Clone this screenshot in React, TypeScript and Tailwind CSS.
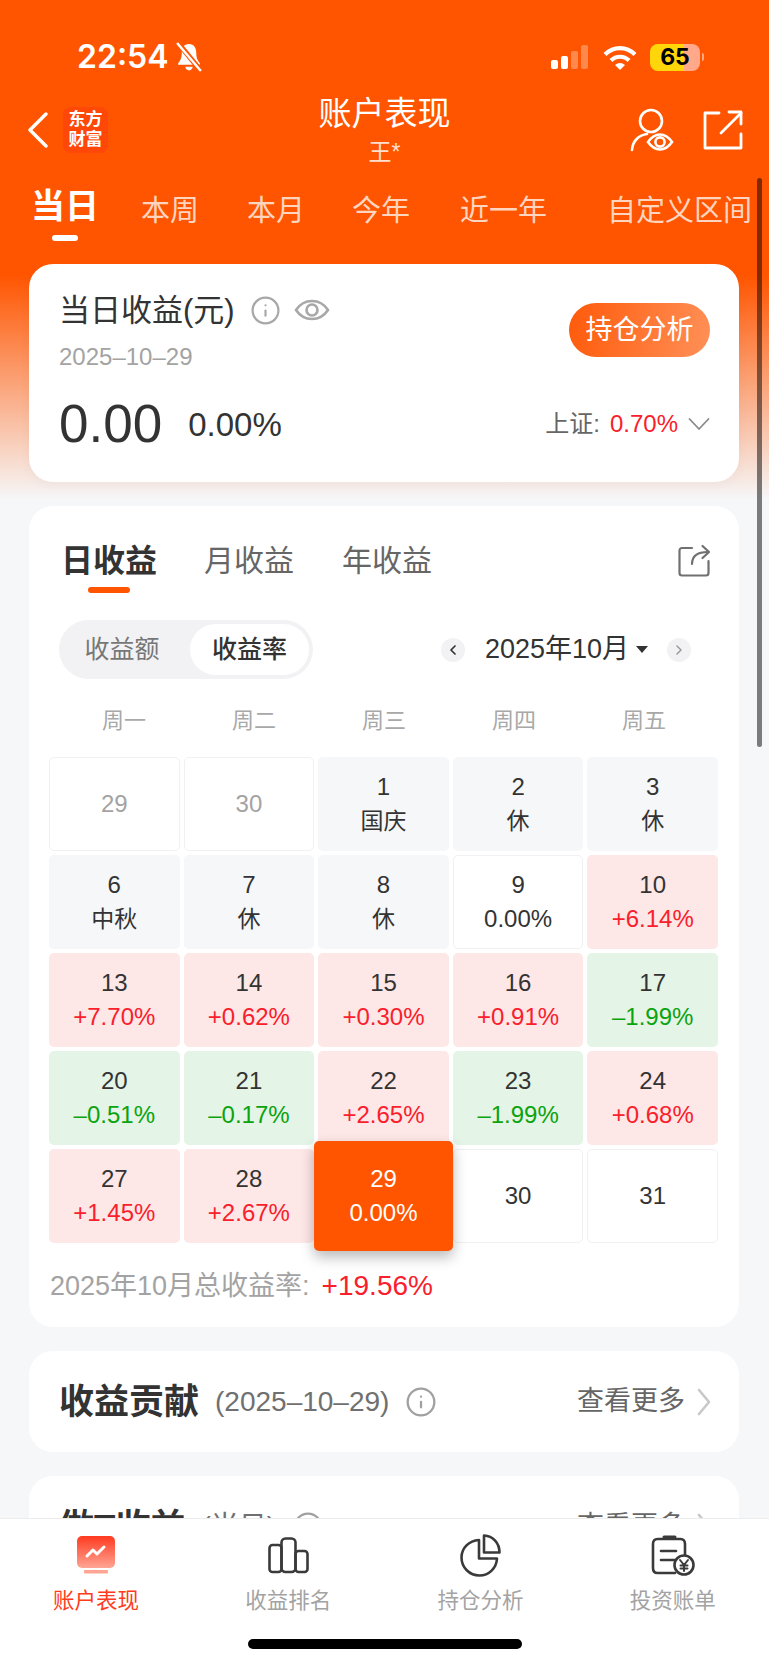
import { ChevronLeft, ChevronRight, Info } from 'lucide-react'

type Tone = 'muted' | 'plain' | 'rest' | 'up' | 'down' | 'today'

type DayCell = { day: number; sub?: string; tone: Tone }

const DAYS: DayCell[] = [
  { day: 29, tone: 'muted' },
  { day: 30, tone: 'muted' },
  { day: 1, sub: '国庆', tone: 'rest' },
  { day: 2, sub: '休', tone: 'rest' },
  { day: 3, sub: '休', tone: 'rest' },
  { day: 6, sub: '中秋', tone: 'rest' },
  { day: 7, sub: '休', tone: 'rest' },
  { day: 8, sub: '休', tone: 'rest' },
  { day: 9, sub: '0.00%', tone: 'plain' },
  { day: 10, sub: '+6.14%', tone: 'up' },
  { day: 13, sub: '+7.70%', tone: 'up' },
  { day: 14, sub: '+0.62%', tone: 'up' },
  { day: 15, sub: '+0.30%', tone: 'up' },
  { day: 16, sub: '+0.91%', tone: 'up' },
  { day: 17, sub: '–1.99%', tone: 'down' },
  { day: 20, sub: '–0.51%', tone: 'down' },
  { day: 21, sub: '–0.17%', tone: 'down' },
  { day: 22, sub: '+2.65%', tone: 'up' },
  { day: 23, sub: '–1.99%', tone: 'down' },
  { day: 24, sub: '+0.68%', tone: 'up' },
  { day: 27, sub: '+1.45%', tone: 'up' },
  { day: 28, sub: '+2.67%', tone: 'up' },
  { day: 29, sub: '0.00%', tone: 'today' },
  { day: 30, tone: 'plain' },
  { day: 31, tone: 'plain' },
]

const CELL_BG: Record<Tone, string> = {
  muted: 'bg-white border border-[#f1f1f3]',
  plain: 'bg-white border border-[#f1f1f3]',
  rest: 'bg-[#f6f7f9]',
  up: 'bg-[#fde7e7]',
  down: 'bg-[#e4f4e6]',
  today: 'z-10',
}

const SUB_STYLE: Record<Tone, string> = {
  muted: 'text-[24px] text-[#a3a3a3]',
  plain: 'text-[24px] text-[#333333]',
  rest: 'text-[23px] text-[#333333]',
  up: 'text-[24px] text-[#f9202c]',
  down: 'text-[24px] text-[#0ba30f]',
  today: 'text-[24px] text-white',
}

function Cell({ cell }: { cell: DayCell }) {
  const dayColor =
    cell.tone === 'muted' ? 'text-[#a3a3a3]' : cell.tone === 'today' ? 'text-white' : 'text-[#333333]'
  return (
    <div className={`relative h-[94px] rounded-[5px] flex flex-col items-center justify-center ${CELL_BG[cell.tone]}`}>
      {cell.tone === 'today' && (
        <div className="absolute -left-[4px] -right-[4px] -top-[8px] -bottom-[8px] rounded-[5px] bg-[#ff5500] shadow-[0_6px_14px_rgba(0,0,0,0.28)]" />
      )}
      <span className={`relative text-[24px] leading-[34px] ${dayColor}`}>{cell.day}</span>
      {cell.sub && <span className={`relative leading-[34px] ${SUB_STYLE[cell.tone]}`}>{cell.sub}</span>}
    </div>
  )
}

function SignalBars() {
  return (
    <div className="flex items-end gap-[3px] h-[24px]">
      <div className="w-[7px] h-[9px] rounded-[2px] bg-white" />
      <div className="w-[7px] h-[13px] rounded-[2px] bg-white" />
      <div className="w-[7px] h-[18px] rounded-[2px] bg-white/30" />
      <div className="w-[7px] h-[24px] rounded-[2px] bg-white/30" />
    </div>
  )
}

function WifiIcon() {
  return (
    <svg width="34" height="25" viewBox="0 0 34 25" fill="none" stroke="white" strokeWidth="4.2">
      <path d="M2 9.5C10.5 1 23.5 1 32 9.5" />
      <path d="M8 15.5C13 10.5 21 10.5 26 15.5" />
      <path d="M12 20L17 25L22 20C19 17.2 15 17.2 12 20Z" fill="white" stroke="none" />
    </svg>
  )
}

function BellSlash() {
  return (
    <svg width="28" height="30" viewBox="0 0 27 29">
      <path d="M13.5 2C8.5 2 6.5 6 6.5 10.5C6.5 15 5.5 18 3 20.5V22H24V20.5C21.5 18 20.5 15 20.5 10.5C20.5 6 18.5 2 13.5 2Z" fill="white" />
      <path d="M10 24H17C17 26 15.5 27.5 13.5 27.5C11.5 27.5 10 26 10 24Z" fill="white" />
      <path d="M3 1L25 28" stroke="#ff5500" strokeWidth="5" />
      <path d="M2 1L25 28" stroke="white" strokeWidth="2.4" />
    </svg>
  )
}

function BackChevron() {
  return (
    <svg width="20" height="36" viewBox="0 0 20 36" fill="none" stroke="white" strokeWidth="3.4" strokeLinecap="round" strokeLinejoin="round">
      <path d="M18 2L2 18L18 34" />
    </svg>
  )
}

function PersonEye() {
  return (
    <svg width="45" height="46" viewBox="0 0 45 46" fill="none" stroke="white" strokeWidth="2.6" strokeLinecap="round">
      <circle cx="22" cy="14" r="11" />
      <path d="M3 43C3.5 34 10 28 18 27" />
      <path d="M19 35C26 25 36 25 43 35C36 45 26 45 19 35Z" fill="#ff5500" />
      <circle cx="31" cy="35" r="4.6" />
    </svg>
  )
}

function ShareBox() {
  return (
    <svg width="40" height="40" viewBox="0 0 40 40" fill="none" stroke="white" strokeWidth="2.8" strokeLinecap="round" strokeLinejoin="round">
      <path d="M16 3H2V38H38V24" />
      <path d="M18 23L38 3" />
      <path d="M26 2H38V14" />
    </svg>
  )
}

function ShareSmall() {
  return (
    <svg width="33" height="33" viewBox="0 0 33 33" fill="none" stroke="#707070" strokeWidth="2.2" strokeLinecap="round" strokeLinejoin="round">
      <path d="M14 4H4C2.5 4 1.5 5 1.5 6.5V29C1.5 30.5 2.5 31.5 4 31.5H28C29.5 31.5 30.5 30.5 30.5 29V17" />
      <path d="M14 20C14 12 19 8 30 8" />
      <path d="M24.5 2L31 8L24.5 14" />
    </svg>
  )
}

function EyeOutline() {
  return (
    <svg width="36" height="26" viewBox="0 0 36 26" fill="none" stroke="#a8a8a8" strokeWidth="2.6">
      <path d="M2 13C10 1 26 1 34 13C26 25 10 25 2 13Z" />
      <circle cx="18" cy="13" r="5.5" />
    </svg>
  )
}

function AccountIcon() {
  return (
    <svg width="40" height="38" viewBox="0 0 40 38">
      <defs>
        <linearGradient id="acct" x1="0" y1="0" x2="0" y2="1">
          <stop offset="0" stopColor="#ff3a1f" />
          <stop offset="1" stopColor="#ffa594" />
        </linearGradient>
      </defs>
      <rect x="1" y="0" width="38" height="32" rx="5" fill="url(#acct)" />
      <path d="M11 20L17 14L21 18L28 11" fill="none" stroke="white" strokeWidth="3" strokeLinecap="round" strokeLinejoin="round" />
      <rect x="8" y="34" width="24" height="3.5" rx="1" fill="#ffa594" />
    </svg>
  )
}

function RankIcon() {
  return (
    <svg width="41" height="37" viewBox="0 0 41 37" fill="none" stroke="#3a3a3a" strokeWidth="2.6" strokeLinejoin="round">
      <rect x="1.5" y="8" width="12" height="27" rx="3" />
      <rect x="13.5" y="1.5" width="14" height="33.5" rx="4" />
      <rect x="27.5" y="14" width="12" height="21" rx="3" />
    </svg>
  )
}

function PieIcon() {
  return (
    <svg width="41" height="43" viewBox="0 0 41 43" fill="none" stroke="#3a3a3a" strokeWidth="2.6" strokeLinejoin="round">
      <path d="M19 6C9 6.5 1.5 14 1.5 23.5C1.5 33.5 9.5 41.5 19.5 41.5C29 41.5 36.5 34 37 24.5H19V6Z" />
      <path d="M24 1.5V18.5H39.5C39.5 9 33 2 24 1.5Z" />
    </svg>
  )
}

function StatementIcon() {
  return (
    <svg width="44" height="41" viewBox="0 0 44 41" fill="none" stroke="#3a3a3a" strokeWidth="2.6" strokeLinecap="round" strokeLinejoin="round">
      <path d="M34 21V9C34 6 32.5 4 29.5 4H6.5C3.5 4 2 6 2 9V33C2 36 3.5 38 6.5 38H24" />
      <path d="M13 2H24" strokeWidth="3" />
      <path d="M10 16H25" />
      <path d="M10 25H25" />
      <circle cx="33" cy="30" r="9.5" fill="white" />
      <path d="M29 25L33 30L37 25M33 30V36M29.5 30.5H36.5M29.5 33.5H36.5" strokeWidth="2" />
    </svg>
  )
}

function SectionRow({ title, hint }: { title: string; hint: string }) {
  return (
    <div className="bg-white rounded-[24px] pl-[30px] pr-[28px] flex items-center justify-between h-[101px]">
      <div className="flex items-center">
        <span className="text-[35px] font-bold text-[#333333] leading-none">{title}</span>
        <span className="ml-[16px] text-[28px] text-[#707070] leading-none">{hint}</span>
        <Info className="ml-[16px] text-[#a0a0a0]" size={32} strokeWidth={1.7} />
      </div>
      <div className="flex items-center">
        <span className="text-[27px] text-[#666666] leading-none">查看更多</span>
        <svg className="ml-[12px]" width="14" height="30" viewBox="0 0 14 30" fill="none" stroke="#c8c8c8" strokeWidth="2.6" strokeLinecap="round" strokeLinejoin="round">
          <path d="M2 3L12 15L2 27" />
        </svg>
      </div>
    </div>
  )
}

export default function App() {
  return (
    <div className="relative w-[769px] h-[1665px] overflow-hidden text-[#333333] [font-family:'Liberation_Sans','Noto_Sans_CJK_SC',sans-serif] bg-[linear-gradient(180deg,#ff5500_0,#ff5500_275px,#f6f7f9_500px)]">
      {/* status bar */}
      <div className="h-[90px] pt-[42px] pl-[77px] pr-[65px] flex items-start justify-between text-white [font-family:Inter,sans-serif]">
        <div className="flex items-center h-[30px]">
          <span className="text-[32px] font-semibold leading-none">22:54</span>
          <span className="ml-[6px]">
            <BellSlash />
          </span>
        </div>
        <div className="flex items-center h-[30px]">
          <SignalBars />
          <span className="ml-[15px]">
            <WifiIcon />
          </span>
          <div className="ml-[13px] w-[50px] h-[27px] rounded-[8px] bg-[linear-gradient(90deg,#ffd60a_68%,#ffa88a_68%)] flex items-center justify-center text-[23px] font-bold text-black leading-none">
            65
          </div>
          <div className="ml-[2px] w-[2px] h-[8px] rounded-r-[2px] bg-white/50" />
        </div>
      </div>

      {/* nav */}
      <div className="h-[80px] pl-[28px] pr-[26px] flex items-center justify-between text-white">
        <div className="flex items-center">
          <BackChevron />
          <div className="ml-[15px] w-[45px] h-[46px] rounded-[8px] bg-[#ff4708] flex flex-col items-center justify-center text-[17px] font-bold leading-[20px]">
            <span>东方</span>
            <span>财富</span>
          </div>
        </div>
        <div className="absolute left-0 right-0 top-[94px] flex flex-col items-center pointer-events-none">
          <span className="text-[33px] leading-[40px]">账户表现</span>
          <span className="mt-[4px] text-[23px] leading-[28px] text-[#ffe0d0]">王*</span>
        </div>
        <div className="flex items-center gap-[29px]">
          <PersonEye />
          <ShareBox />
        </div>
      </div>

      {/* period tabs */}
      <div className="h-[94px] pl-[31px] flex items-start text-[29px] text-[#ffd5c0] whitespace-nowrap">
        <div className="mt-[15px] w-[68px] flex flex-col items-center text-white">
          <span className="text-[34px] font-semibold leading-[42px]">当日</span>
          <span className="mt-[8px] w-[26px] h-[6px] rounded-full bg-white" />
        </div>
        <span className="ml-[42px] mt-[23px] leading-[36px]">本周</span>
        <span className="ml-[48px] mt-[23px] leading-[36px]">本月</span>
        <span className="ml-[47px] mt-[23px] leading-[36px]">今年</span>
        <span className="ml-[50px] mt-[23px] leading-[36px]">近一年</span>
        <span className="ml-[60px] mt-[23px] leading-[36px]">自定义区间</span>
      </div>

      <div className="pl-[29px] pr-[30px] flex flex-col gap-[24px]">
        {/* today summary */}
        <div className="h-[218px] bg-white rounded-[24px] pl-[30px] pr-[29px] pt-[26px] shadow-[0_4px_12px_rgba(0,0,0,0.03)]">
          <div className="flex items-start justify-between">
            <div>
              <div className="flex items-center h-[40px]">
                <span className="text-[31px] text-[#333333] leading-none">当日收益(元)</span>
                <Info className="ml-[15px] text-[#a8a8a8]" size={31} strokeWidth={1.7} />
                <span className="ml-[13px]">
                  <EyeOutline />
                </span>
              </div>
              <div className="mt-[12px] text-[24px] leading-[30px] text-[#a3a3a3]">2025–10–29</div>
            </div>
            <div className="mt-[13px] w-[141px] h-[54px] rounded-full bg-[linear-gradient(100deg,#ff5a0a,#ff9058)] flex items-center justify-center text-white text-[27px] leading-none">
              持仓分析
            </div>
          </div>
          <div className="mt-[22px] flex items-center justify-between">
            <div className="flex items-center">
              <span className="text-[53px] leading-[60px] text-[#333333]">0.00</span>
              <span className="ml-[26px] text-[33px] leading-none text-[#333333]">0.00%</span>
            </div>
            <div className="flex items-center">
              <span className="text-[24px] leading-none text-[#666666]">上证:</span>
              <span className="ml-[10px] text-[24px] leading-none text-[#f9202c]">0.70%</span>
              <svg className="ml-[10px]" width="22" height="14" viewBox="0 0 22 14" fill="none" stroke="#8a8a8a" strokeWidth="1.8" strokeLinecap="round" strokeLinejoin="round">
                <path d="M1.5 2L11 12L20.5 2" />
              </svg>
            </div>
          </div>
        </div>

        {/* calendar */}
        <div className="h-[821px] bg-white rounded-[24px] pt-[36px]">
          <div className="pl-[32px] pr-[28px] flex items-start justify-between">
            <div className="flex items-start text-[30px] leading-[38px] text-[#666666]">
              <div className="flex flex-col items-center">
                <span className="text-[32px] font-bold text-[#333333]">日收益</span>
                <span className="mt-[7px] w-[42px] h-[6px] rounded-full bg-[#ff5500]" />
              </div>
              <span className="ml-[47px]">月收益</span>
              <span className="ml-[48px]">年收益</span>
            </div>
            <span className="mt-[2px]">
              <ShareSmall />
            </span>
          </div>

          <div className="mt-[27px] pl-[30px] pr-[48px] flex items-center justify-between">
            <div className="w-[254px] h-[59px] rounded-full bg-[#f2f2f4] flex items-center pl-[4px]">
              <span className="w-[118px] text-center text-[25px] text-[#777777] leading-none">收益额</span>
              <span className="ml-[9px] w-[119px] h-[51px] rounded-full bg-white flex items-center justify-center text-[25px] font-medium text-[#333333] leading-none">
                收益率
              </span>
            </div>
            <div className="flex items-center">
              <span className="w-[24px] h-[24px] rounded-full bg-[#f2f2f4] flex items-center justify-center">
                <ChevronLeft className="text-[#333333]" size={16} strokeWidth={2.6} />
              </span>
              <span className="ml-[20px] text-[27px] leading-none text-[#333333]">2025年10月</span>
              <span className="ml-[7px] w-0 h-0 border-x-[6px] border-x-transparent border-t-[7px] border-t-[#333333]" />
              <span className="ml-[19px] w-[24px] h-[24px] rounded-full bg-[#f2f2f4] flex items-center justify-center">
                <ChevronRight className="text-[#999999]" size={16} strokeWidth={2.2} />
              </span>
            </div>
          </div>

          <div className="mt-[28px] px-[30px] grid grid-cols-5 text-center text-[22px] leading-[28px] text-[#a8a8a8]">
            <span>周一</span>
            <span>周二</span>
            <span>周三</span>
            <span>周四</span>
            <span>周五</span>
          </div>

          <div className="mt-[22px] pl-[20px] pr-[21px] grid grid-cols-5 gap-x-[4px] gap-y-[4px]">
            {DAYS.map((c, i) => (
              <Cell key={i} cell={c} />
            ))}
          </div>

          <div className="mt-[25px] pl-[21px] flex items-center h-[36px]">
            <span className="text-[27px] leading-none text-[#a3a3a3]">2025年10月总收益率:</span>
            <span className="ml-[12px] text-[28px] font-medium leading-none text-[#f9202c]">+19.56%</span>
          </div>
        </div>

        <SectionRow title="收益贡献" hint="(2025–10–29)" />
        <SectionRow title="做T收益" hint="(当日)" />
      </div>

      {/* scroll indicator */}
      <div className="absolute right-[7px] top-[178px] w-[5px] h-[569px] rounded-full bg-black/50" />

      {/* bottom tabs */}
      <div className="absolute left-0 right-0 bottom-0 h-[147px] bg-white border-t border-[#ececec]">
        <div className="grid grid-cols-4 pt-[14px]">
          <div className="flex flex-col items-center">
            <div className="h-[44px] flex items-center"><AccountIcon /></div>
            <span className="mt-[9px] text-[21.5px] leading-[30px] text-[#ff3b20]">账户表现</span>
          </div>
          <div className="flex flex-col items-center">
            <div className="h-[44px] flex items-center"><RankIcon /></div>
            <span className="mt-[9px] text-[21.5px] leading-[30px] text-[#a3a3a3]">收益排名</span>
          </div>
          <div className="flex flex-col items-center">
            <div className="h-[44px] flex items-center"><PieIcon /></div>
            <span className="mt-[9px] text-[21.5px] leading-[30px] text-[#a3a3a3]">持仓分析</span>
          </div>
          <div className="flex flex-col items-center">
            <div className="h-[44px] flex items-center"><StatementIcon /></div>
            <span className="mt-[9px] text-[21.5px] leading-[30px] text-[#a3a3a3]">投资账单</span>
          </div>
        </div>
        <div className="absolute left-[248px] bottom-[16px] w-[274px] h-[10px] rounded-full bg-black" />
      </div>
    </div>
  )
}
